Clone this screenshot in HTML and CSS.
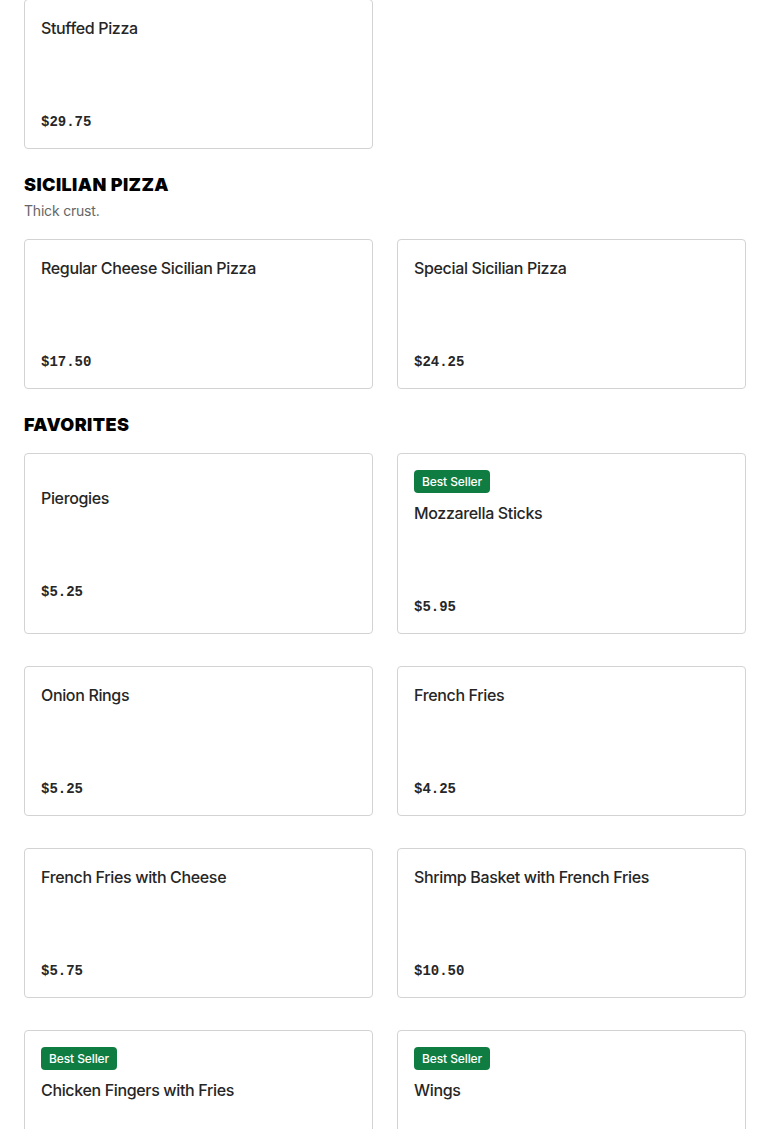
FILE: index.html
```html
<!DOCTYPE html>
<html>
<head>
<meta charset="utf-8">
<link rel="stylesheet" href="styles.css">
</head>
<body>
<main class="menu">
  <section class="section first">
    <div class="grid">
      <div class="card"><div class="body"><div class="title">Stuffed Pizza</div><div class="price">$29.75</div></div></div>
    </div>
  </section>

  <section class="section">
    <header class="section-head">
      <h2 class="heading">SICILIAN PIZZA</h2>
      <p class="desc">Thick crust.</p>
    </header>
    <div class="grid">
      <div class="card"><div class="body"><div class="title">Regular Cheese Sicilian Pizza</div><div class="price">$17.50</div></div></div>
      <div class="card"><div class="body"><div class="title">Special Sicilian Pizza</div><div class="price">$24.25</div></div></div>
    </div>
  </section>

  <section class="section">
    <header class="section-head">
      <h2 class="heading">FAVORITES</h2>
    </header>
    <div class="grid">
      <div class="card"><div class="body"><div class="title">Pierogies</div><div class="price">$5.25</div></div></div>
      <div class="card"><span class="badge">Best Seller</span><div class="body"><div class="title">Mozzarella Sticks</div><div class="price">$5.95</div></div></div>
      <div class="card"><div class="body"><div class="title">Onion Rings</div><div class="price">$5.25</div></div></div>
      <div class="card"><div class="body"><div class="title">French Fries</div><div class="price">$4.25</div></div></div>
      <div class="card"><div class="body"><div class="title">French Fries with Cheese</div><div class="price">$5.75</div></div></div>
      <div class="card"><div class="body"><div class="title">Shrimp Basket with French Fries</div><div class="price">$10.50</div></div></div>
      <div class="card"><span class="badge">Best Seller</span><div class="body"><div class="title">Chicken Fingers with Fries</div><div class="price">$6.95</div></div></div>
      <div class="card"><span class="badge">Best Seller</span><div class="body"><div class="title">Wings</div><div class="price">$8.95</div></div></div>
    </div>
  </section>
</main>
</body>
</html>
```

FILE: styles.css
```css
html, body {
  margin: 0;
  padding: 0;
  background: #ffffff;
}

body {
  font-family: Inter, "Liberation Sans", sans-serif;
  color: #262626;
}

.menu {
  padding: 0 24px;
  margin-top: -1px;
}

.section {
  margin-top: 24px;
}

.section.first {
  margin-top: 0;
}

.section-head {
  padding-bottom: 16px;
}

.heading {
  margin: 0;
  font-family: Inter, "Liberation Sans", sans-serif;
  font-weight: 900;
  font-size: 18px;
  line-height: 24px;
  color: #000;
  letter-spacing: 0.4px;
}

.desc {
  margin: 4px 0 2px;
  font-size: 14px;
  line-height: 20px;
  color: #666;
  letter-spacing: -0.2px;
}

.grid {
  display: grid;
  grid-template-columns: 1fr 1fr;
  column-gap: 24px;
  row-gap: 32px;
}

.card {
  border: 1px solid #d3d3d3;
  border-radius: 4px;
  padding: 16px;
  display: flex;
  flex-direction: column;
  justify-content: center;
  align-items: flex-start;
  min-height: 116px;
}

.badge {
  display: inline-block;
  background: #0f7d42;
  color: #fff;
  font-size: 12px;
  font-weight: 500;
  line-height: 23px;
  height: 23px;
  padding: 0 8px;
  border-radius: 4px;
  margin-bottom: 8px;
  letter-spacing: -0.1px;
}

.body {
  height: 116px;
  display: flex;
  flex-direction: column;
  align-self: stretch;
}

.title {
  font-size: 16px;
  font-weight: 500;
  line-height: 24px;
  color: #262626;
  letter-spacing: -0.35px;
}

.price {
  margin-top: auto;
  font-family: "Liberation Mono", "DejaVu Sans Mono", monospace;
  font-weight: 700;
  font-size: 14px;
  line-height: 20px;
  color: #262626;
}
```
